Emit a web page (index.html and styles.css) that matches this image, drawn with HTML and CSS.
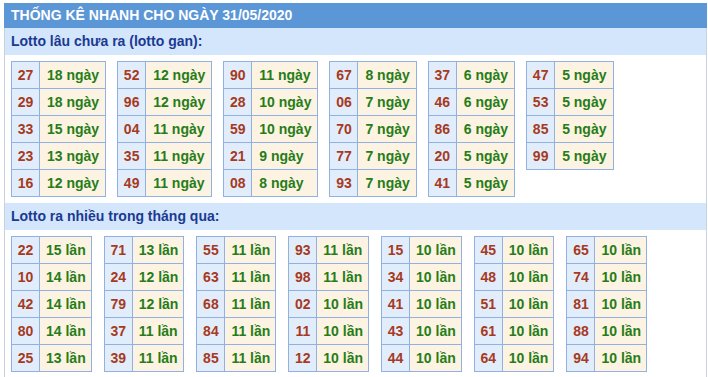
FILE: index.html
```html
<!DOCTYPE html>
<html lang="vi">
<head>
<meta charset="utf-8">
<link rel="stylesheet" href="styles.css">
</head>
<body>
<div class="box">
  <div class="title">THỐNG KÊ NHANH CHO NGÀY 31/05/2020</div>
  <div class="sub">Lotto lâu chưa ra (lotto gan):</div>
  <div class="grid gan">
    <table><tr><td class="n">27</td><td class="v">18 ngày</td></tr><tr><td class="n">29</td><td class="v">18 ngày</td></tr><tr><td class="n">33</td><td class="v">15 ngày</td></tr><tr><td class="n">23</td><td class="v">13 ngày</td></tr><tr><td class="n">16</td><td class="v">12 ngày</td></tr></table>
    <table><tr><td class="n">52</td><td class="v">12 ngày</td></tr><tr><td class="n">96</td><td class="v">12 ngày</td></tr><tr><td class="n">04</td><td class="v">11 ngày</td></tr><tr><td class="n">35</td><td class="v">11 ngày</td></tr><tr><td class="n">49</td><td class="v">11 ngày</td></tr></table>
    <table><tr><td class="n">90</td><td class="v">11 ngày</td></tr><tr><td class="n">28</td><td class="v">10 ngày</td></tr><tr><td class="n">59</td><td class="v">10 ngày</td></tr><tr><td class="n">21</td><td class="v">9 ngày</td></tr><tr><td class="n">08</td><td class="v">8 ngày</td></tr></table>
    <table><tr><td class="n">67</td><td class="v">8 ngày</td></tr><tr><td class="n">06</td><td class="v">7 ngày</td></tr><tr><td class="n">70</td><td class="v">7 ngày</td></tr><tr><td class="n">77</td><td class="v">7 ngày</td></tr><tr><td class="n">93</td><td class="v">7 ngày</td></tr></table>
    <table><tr><td class="n">37</td><td class="v">6 ngày</td></tr><tr><td class="n">46</td><td class="v">6 ngày</td></tr><tr><td class="n">86</td><td class="v">6 ngày</td></tr><tr><td class="n">20</td><td class="v">5 ngày</td></tr><tr><td class="n">41</td><td class="v">5 ngày</td></tr></table>
    <table><tr><td class="n">47</td><td class="v">5 ngày</td></tr><tr><td class="n">53</td><td class="v">5 ngày</td></tr><tr><td class="n">85</td><td class="v">5 ngày</td></tr><tr><td class="n">99</td><td class="v">5 ngày</td></tr></table>
  </div>
  <div class="sub">Lotto ra nhiều trong tháng qua:</div>
  <div class="grid nhieu">
    <table><tr><td class="n">22</td><td class="v">15 lần</td></tr><tr><td class="n">10</td><td class="v">14 lần</td></tr><tr><td class="n">42</td><td class="v">14 lần</td></tr><tr><td class="n">80</td><td class="v">14 lần</td></tr><tr><td class="n">25</td><td class="v">13 lần</td></tr></table>
    <table><tr><td class="n">71</td><td class="v">13 lần</td></tr><tr><td class="n">24</td><td class="v">12 lần</td></tr><tr><td class="n">79</td><td class="v">12 lần</td></tr><tr><td class="n">37</td><td class="v">11 lần</td></tr><tr><td class="n">39</td><td class="v">11 lần</td></tr></table>
    <table><tr><td class="n">55</td><td class="v">11 lần</td></tr><tr><td class="n">63</td><td class="v">11 lần</td></tr><tr><td class="n">68</td><td class="v">11 lần</td></tr><tr><td class="n">84</td><td class="v">11 lần</td></tr><tr><td class="n">85</td><td class="v">11 lần</td></tr></table>
    <table><tr><td class="n">93</td><td class="v">11 lần</td></tr><tr><td class="n">98</td><td class="v">11 lần</td></tr><tr><td class="n">02</td><td class="v">10 lần</td></tr><tr><td class="n">11</td><td class="v">10 lần</td></tr><tr><td class="n">12</td><td class="v">10 lần</td></tr></table>
    <table><tr><td class="n">15</td><td class="v">10 lần</td></tr><tr><td class="n">34</td><td class="v">10 lần</td></tr><tr><td class="n">41</td><td class="v">10 lần</td></tr><tr><td class="n">43</td><td class="v">10 lần</td></tr><tr><td class="n">44</td><td class="v">10 lần</td></tr></table>
    <table><tr><td class="n">45</td><td class="v">10 lần</td></tr><tr><td class="n">48</td><td class="v">10 lần</td></tr><tr><td class="n">51</td><td class="v">10 lần</td></tr><tr><td class="n">61</td><td class="v">10 lần</td></tr><tr><td class="n">64</td><td class="v">10 lần</td></tr></table>
    <table><tr><td class="n">65</td><td class="v">10 lần</td></tr><tr><td class="n">74</td><td class="v">10 lần</td></tr><tr><td class="n">81</td><td class="v">10 lần</td></tr><tr><td class="n">88</td><td class="v">10 lần</td></tr><tr><td class="n">94</td><td class="v">10 lần</td></tr></table>
  </div>
</div>
</body>
</html>
```

FILE: styles.css
```css
html, body {
  margin: 0;
  padding: 0;
  background: #ffffff;
}
body {
  font-family: "Liberation Sans", Arial, sans-serif;
  font-weight: bold;
  font-size: 14px;
}
.box {
  margin: 3px 0 0 4px;
  width: 703px;
  height: 374px;
  box-sizing: border-box;
  border-left: 1px solid #c9d3de;
  border-right: 1px solid #c9d3de;
}
.title {
  height: 25px;
  line-height: 25px;
  margin-left: -1px;
  margin-right: -1px;
  padding-left: 7px;
  background: #5b96d6;
  color: #ffffff;
}
.sub {
  height: 27px;
  line-height: 27px;
  padding-left: 6px;
  background: #d4e6fb;
  color: #1b3a92;
}
.grid {
  display: flex;
  align-items: flex-start;
  padding: 6px 0 6px 6px;
}
.gan { gap: 11px; }
.nhieu { gap: 12px; }
table {
  border-collapse: collapse;
}
td {
  border: 1px solid #91b1e3;
  height: 26px;
  padding: 0;
  line-height: 16px;
  white-space: nowrap;
}
td.n {
  width: 27px;
  background: #e2edfc;
  color: #a63a1e;
  text-align: center;
  padding: 0;
}
td.v {
  background: #fdf3e3;
  color: #267d17;
  padding: 0 6px 0 7px;
}
.nhieu td.v {
  padding: 0 5px 0 6px;
}
```
